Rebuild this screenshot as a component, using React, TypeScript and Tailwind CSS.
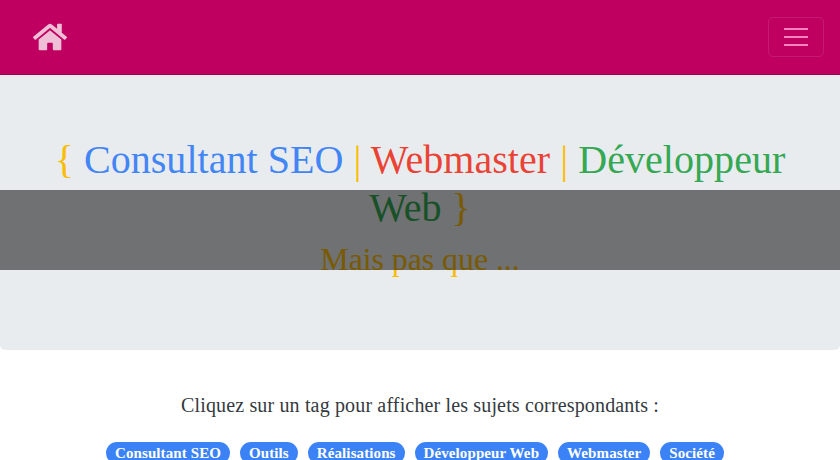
import { FaHome } from "react-icons/fa";

const tags = ["Consultant SEO", "Outils", "Réalisations", "Développeur Web", "Webmaster", "Société"];

function Navbar() {
  return (
    <nav className="flex h-[75px] items-center justify-between border-b border-[#a00050] bg-[#c00060] pl-[33px] pr-[16px]">
      <a href="#" className="text-white/75">
        <FaHome className="h-[34px] w-[34px]" />
      </a>
      <button className="flex h-[40px] w-[56px] flex-col items-center justify-center gap-[6px] rounded-[5px] border border-white/10">
        <span className="h-[2px] w-[24px] bg-[#ff80bf]" />
        <span className="h-[2px] w-[24px] bg-[#ff80bf]" />
        <span className="h-[2px] w-[24px] bg-[#ff80bf]" />
      </button>
    </nav>
  );
}

function Hero() {
  return (
    <section className="relative h-[275px] rounded-b-[5px] bg-[#e9ecef] px-[48px] pt-[61px] text-center">
      <h1 className="text-[40px] leading-[48px] tracking-[0.04px]">
        <span className="text-[#fbbc05]">{"{"}</span> <span className="text-[#4285f4]">Consultant SEO</span>{" "}
        <span className="text-[#fbbc05]">|</span> <span className="text-[#ea4335]">Webmaster</span>{" "}
        <span className="text-[#fbbc05]">|</span> <span className="text-[#34a853]">Développeur Web</span>{" "}
        <span className="text-[#fbbc05]">{"}"}</span>
      </h1>
      <p className="mt-[7px] text-[32px] leading-[40px] tracking-[-0.1px] text-[#fbbc05]">Mais pas que ...</p>
      <div className="absolute inset-x-0 top-[115px] h-[80px] bg-black/[.52]" />
    </section>
  );
}

export default function App() {
  return (
    <div className="h-[460px] overflow-hidden bg-white font-['Liberation_Serif',serif] text-[#343a40]">
      <Navbar />
      <Hero />
      <p className="mt-[42px] text-center text-[20px] leading-[26px] tracking-[0.15px]">
        Cliquez sur un tag pour afficher les sujets correspondants :
      </p>
      <div className="mt-[24px] flex justify-center">
        {tags.map((tag) => (
          <span key={tag} className="mr-[10px] rounded-full bg-[#3b82f6] px-[9px] text-[15px] leading-[22px] font-bold tracking-[0.1px] text-white">
            {tag}
          </span>
        ))}
      </div>
    </div>
  );
}
